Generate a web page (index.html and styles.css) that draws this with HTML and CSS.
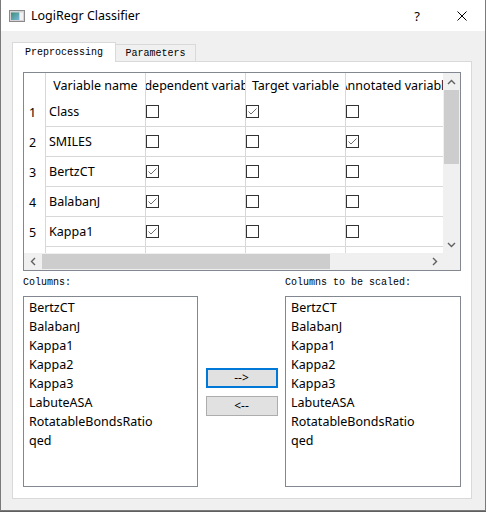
FILE: index.html
```html
<!DOCTYPE html>
<html>
<head>
<meta charset="utf-8">
<link rel="stylesheet" href="styles.css">
</head>
<body>
<div class="window">
  <div class="titlebar">
    <svg class="app-icon" width="16" height="12" viewBox="0 0 16 12">
      <defs>
        <linearGradient id="g" x1="0" y1="0" x2="1" y2="1">
          <stop offset="0" stop-color="#3a8f7a"/>
          <stop offset="1" stop-color="#7ab6d8"/>
        </linearGradient>
      </defs>
      <rect x="0.5" y="0.5" width="15" height="11" fill="#d4d4d4" stroke="#8a8a8a"/>
      <rect x="2" y="2.5" width="8" height="7.5" fill="url(#g)"/>
      <rect x="11" y="2.5" width="3" height="7.5" fill="#f2f2f2"/>
    </svg>
    <span class="title">LogiRegr Classifier</span>
    <span class="help">?</span>
    <svg class="close" width="10" height="10" viewBox="0 0 10 10"><path d="M0.5 0.5 L9.5 9.5 M9.5 0.5 L0.5 9.5" stroke="#000" stroke-width="1" fill="none"/></svg>
  </div>
  <div class="body">
    <div class="tabs">
      <div class="tab active">Preprocessing</div>
      <div class="tab inactive">Parameters</div>
    </div>
    <div class="pane">
      <div class="table">
        <div class="viewport">
          <div class="grow hdr">
            <div class="cell vh"></div>
            <div class="cell">Variable name</div>
            <div class="cell">Independent variable</div>
            <div class="cell">Target variable</div>
            <div class="cell">Annotated variable</div>
          </div>
          <div class="grow brow">
            <div class="cell vh">1</div>
            <div class="cell name">Class</div>
            <div class="cell ck"><svg class="cb" width="13" height="13" viewBox="0 0 13 13"><rect x="0.5" y="0.5" width="12" height="12" fill="#fff" stroke="#333"/></svg></div>
            <div class="cell ck"><svg class="cb" width="13" height="13" viewBox="0 0 13 13"><rect x="0.5" y="0.5" width="12" height="12" fill="#fff" stroke="#333"/><path d="M2.5 6.5 L5 9 L10.5 3.5" fill="none" stroke="#707070"/></svg></div>
            <div class="cell ck"><svg class="cb" width="13" height="13" viewBox="0 0 13 13"><rect x="0.5" y="0.5" width="12" height="12" fill="#fff" stroke="#333"/></svg></div>
          </div>
          <div class="grow brow">
            <div class="cell vh">2</div>
            <div class="cell name">SMILES</div>
            <div class="cell ck"><svg class="cb" width="13" height="13" viewBox="0 0 13 13"><rect x="0.5" y="0.5" width="12" height="12" fill="#fff" stroke="#333"/></svg></div>
            <div class="cell ck"><svg class="cb" width="13" height="13" viewBox="0 0 13 13"><rect x="0.5" y="0.5" width="12" height="12" fill="#fff" stroke="#333"/></svg></div>
            <div class="cell ck"><svg class="cb" width="13" height="13" viewBox="0 0 13 13"><rect x="0.5" y="0.5" width="12" height="12" fill="#fff" stroke="#333"/><path d="M2.5 6.5 L5 9 L10.5 3.5" fill="none" stroke="#707070"/></svg></div>
          </div>
          <div class="grow brow">
            <div class="cell vh">3</div>
            <div class="cell name">BertzCT</div>
            <div class="cell ck"><svg class="cb" width="13" height="13" viewBox="0 0 13 13"><rect x="0.5" y="0.5" width="12" height="12" fill="#fff" stroke="#333"/><path d="M2.5 6.5 L5 9 L10.5 3.5" fill="none" stroke="#707070"/></svg></div>
            <div class="cell ck"><svg class="cb" width="13" height="13" viewBox="0 0 13 13"><rect x="0.5" y="0.5" width="12" height="12" fill="#fff" stroke="#333"/></svg></div>
            <div class="cell ck"><svg class="cb" width="13" height="13" viewBox="0 0 13 13"><rect x="0.5" y="0.5" width="12" height="12" fill="#fff" stroke="#333"/></svg></div>
          </div>
          <div class="grow brow">
            <div class="cell vh">4</div>
            <div class="cell name">BalabanJ</div>
            <div class="cell ck"><svg class="cb" width="13" height="13" viewBox="0 0 13 13"><rect x="0.5" y="0.5" width="12" height="12" fill="#fff" stroke="#333"/><path d="M2.5 6.5 L5 9 L10.5 3.5" fill="none" stroke="#707070"/></svg></div>
            <div class="cell ck"><svg class="cb" width="13" height="13" viewBox="0 0 13 13"><rect x="0.5" y="0.5" width="12" height="12" fill="#fff" stroke="#333"/></svg></div>
            <div class="cell ck"><svg class="cb" width="13" height="13" viewBox="0 0 13 13"><rect x="0.5" y="0.5" width="12" height="12" fill="#fff" stroke="#333"/></svg></div>
          </div>
          <div class="grow brow">
            <div class="cell vh">5</div>
            <div class="cell name">Kappa1</div>
            <div class="cell ck"><svg class="cb" width="13" height="13" viewBox="0 0 13 13"><rect x="0.5" y="0.5" width="12" height="12" fill="#fff" stroke="#333"/><path d="M2.5 6.5 L5 9 L10.5 3.5" fill="none" stroke="#707070"/></svg></div>
            <div class="cell ck"><svg class="cb" width="13" height="13" viewBox="0 0 13 13"><rect x="0.5" y="0.5" width="12" height="12" fill="#fff" stroke="#333"/></svg></div>
            <div class="cell ck"><svg class="cb" width="13" height="13" viewBox="0 0 13 13"><rect x="0.5" y="0.5" width="12" height="12" fill="#fff" stroke="#333"/></svg></div>
          </div>
          <div class="grow brow">
            <div class="cell vh"></div>
            <div class="cell name"></div>
            <div class="cell ck"></div>
            <div class="cell ck"></div>
            <div class="cell ck"></div>
          </div>
        </div>
        <div class="vscroll">
          <div class="sb-btn"><svg width="9" height="6" viewBox="0 0 9 6"><path d="M1 5 L4.5 1.5 L8 5" stroke="#606060" stroke-width="1.4" fill="none"/></svg></div>
          <div class="vthumb"></div>
          <div class="sb-btn sb-end"><svg width="9" height="6" viewBox="0 0 9 6"><path d="M1 1 L4.5 4.5 L8 1" stroke="#606060" stroke-width="1.4" fill="none"/></svg></div>
        </div>
        <div class="hscroll">
          <div class="sb-btn"><svg width="6" height="9" viewBox="0 0 6 9"><path d="M5 1 L1.5 4.5 L5 8" stroke="#606060" stroke-width="1.4" fill="none"/></svg></div>
          <div class="hthumb"></div>
          <div class="sb-btn sb-end"><svg width="6" height="9" viewBox="0 0 6 9"><path d="M1 1 L4.5 4.5 L1 8" stroke="#606060" stroke-width="1.4" fill="none"/></svg></div>
        </div>
        <div class="corner"></div>
      </div>
      <div class="lower">
        <div class="label">Columns:</div>
        <div></div>
        <div class="label">Columns to be scaled:</div>
        <div class="list">
          <div>BertzCT</div>
          <div>BalabanJ</div>
          <div>Kappa1</div>
          <div>Kappa2</div>
          <div>Kappa3</div>
          <div>LabuteASA</div>
          <div>RotatableBondsRatio</div>
          <div>qed</div>
        </div>
        <div class="buttons">
          <div class="btn focus">--&gt;</div>
          <div class="btn">&lt;--</div>
        </div>
        <div class="list">
          <div>BertzCT</div>
          <div>BalabanJ</div>
          <div>Kappa1</div>
          <div>Kappa2</div>
          <div>Kappa3</div>
          <div>LabuteASA</div>
          <div>RotatableBondsRatio</div>
          <div>qed</div>
        </div>
      </div>
    </div>
  </div>
</div>
</body>
</html>
```

FILE: styles.css
```css
body {
  margin: 0;
  background: #5f5f5f;
  font-family: "Noto Sans", "Open Sans", sans-serif;
  font-size: 12.5px;
  color: #000;
}

.window {
  width: 486px;
  height: 511px;
  box-sizing: border-box;
  border: 1px solid #7a7a7a;
  border-top: 0;
  background: #f0f0f0;
  display: flex;
  flex-direction: column;
}

.titlebar {
  flex: none;
  height: 31px;
  background: #fff;
  display: flex;
  align-items: center;
}

.app-icon {
  margin-left: 8px;
  flex: none;
}

.title {
  margin-left: 6px;
  font-size: 12.5px;
}

.help {
  margin-left: auto;
  font-size: 13px;
}

.close {
  margin-left: 37px;
  margin-right: 18px;
  flex: none;
}

.body {
  flex: 1;
  padding: 11px 0 0 11px;
}

.tabs {
  display: flex;
  align-items: flex-end;
  height: 19px;
  position: relative;
  z-index: 1;
}

.tab {
  box-sizing: border-box;
  font-family: "Liberation Mono", monospace;
  font-size: 10px;
  display: flex;
  align-items: center;
  justify-content: center;
  border: 1px solid #d9d9d9;
  border-bottom: 0;
}

.tab.active {
  width: 104px;
  height: 20px;
  margin-bottom: -1px;
  background: #fff;
}

.tab.inactive {
  width: 80px;
  height: 17px;
  border-left: 0;
  background: #f0f0f0;
}

.pane {
  width: 460px;
  box-sizing: border-box;
  border: 1px solid #d9d9d9;
  background: #fff;
  padding: 10px 10px 11px;
}

.table {
  width: 438px;
  height: 199px;
  box-sizing: border-box;
  border: 1px solid #828790;
  display: grid;
  grid-template-columns: 1fr 17px;
  grid-template-rows: 1fr 17px;
}

.viewport {
  overflow: hidden;
  background: #fff;
}

.grow {
  display: grid;
  grid-template-columns: 22px 100px 100px 100px 100px;
}

.hdr {
  height: 24px;
}

.brow {
  height: 30px;
}

.cell {
  box-sizing: border-box;
  border-right: 1px solid #d8d8d8;
  display: flex;
  align-items: center;
  overflow: hidden;
  white-space: nowrap;
}

.hdr .cell {
  justify-content: center;
}

.brow .cell {
  border-bottom: 1px solid #d8d8d8;
}

.brow .vh {
  border-bottom: 0;
  padding-left: 5px;
}

.name {
  padding-left: 3px;
}

.cb {
  flex: none;
  display: block;
}

.vscroll {
  background: #f0f0f0;
  display: flex;
  flex-direction: column;
}

.hscroll {
  background: #f0f0f0;
  display: flex;
  align-items: center;
}

.corner {
  background: #f0f0f0;
}

.sb-btn {
  width: 17px;
  height: 17px;
  flex: none;
  display: flex;
  align-items: center;
  justify-content: center;
}

.sb-end {
  margin-top: auto;
}

.hscroll .sb-end {
  margin-top: 0;
  margin-left: auto;
}

.vthumb {
  width: 15px;
  height: 74px;
  margin-left: 1px;
  background: #cdcdcd;
}

.hthumb {
  width: 288px;
  height: 15px;
  margin-left: 1px;
  background: #cdcdcd;
}

.lower {
  margin-top: 5px;
  display: grid;
  grid-template-columns: 175px 87px 176px;
  grid-template-rows: 14px 191px;
  row-gap: 6px;
}

.label {
  font-family: "Liberation Mono", monospace;
  font-size: 10px;
  line-height: 14px;
}

.list {
  box-sizing: border-box;
  border: 1px solid #828790;
  background: #fff;
  padding: 1px 5px;
}

.list div {
  height: 19px;
  line-height: 19px;
}

.buttons {
  display: flex;
  flex-direction: column;
  align-items: center;
  justify-content: center;
  gap: 8px;
}

.btn {
  width: 72px;
  height: 20px;
  box-sizing: border-box;
  background: #e1e1e1;
  border: 1px solid #adadad;
  display: flex;
  align-items: center;
  justify-content: center;
  font-size: 12px;
}

.btn.focus {
  border: 2px solid #0078d7;
}
```
